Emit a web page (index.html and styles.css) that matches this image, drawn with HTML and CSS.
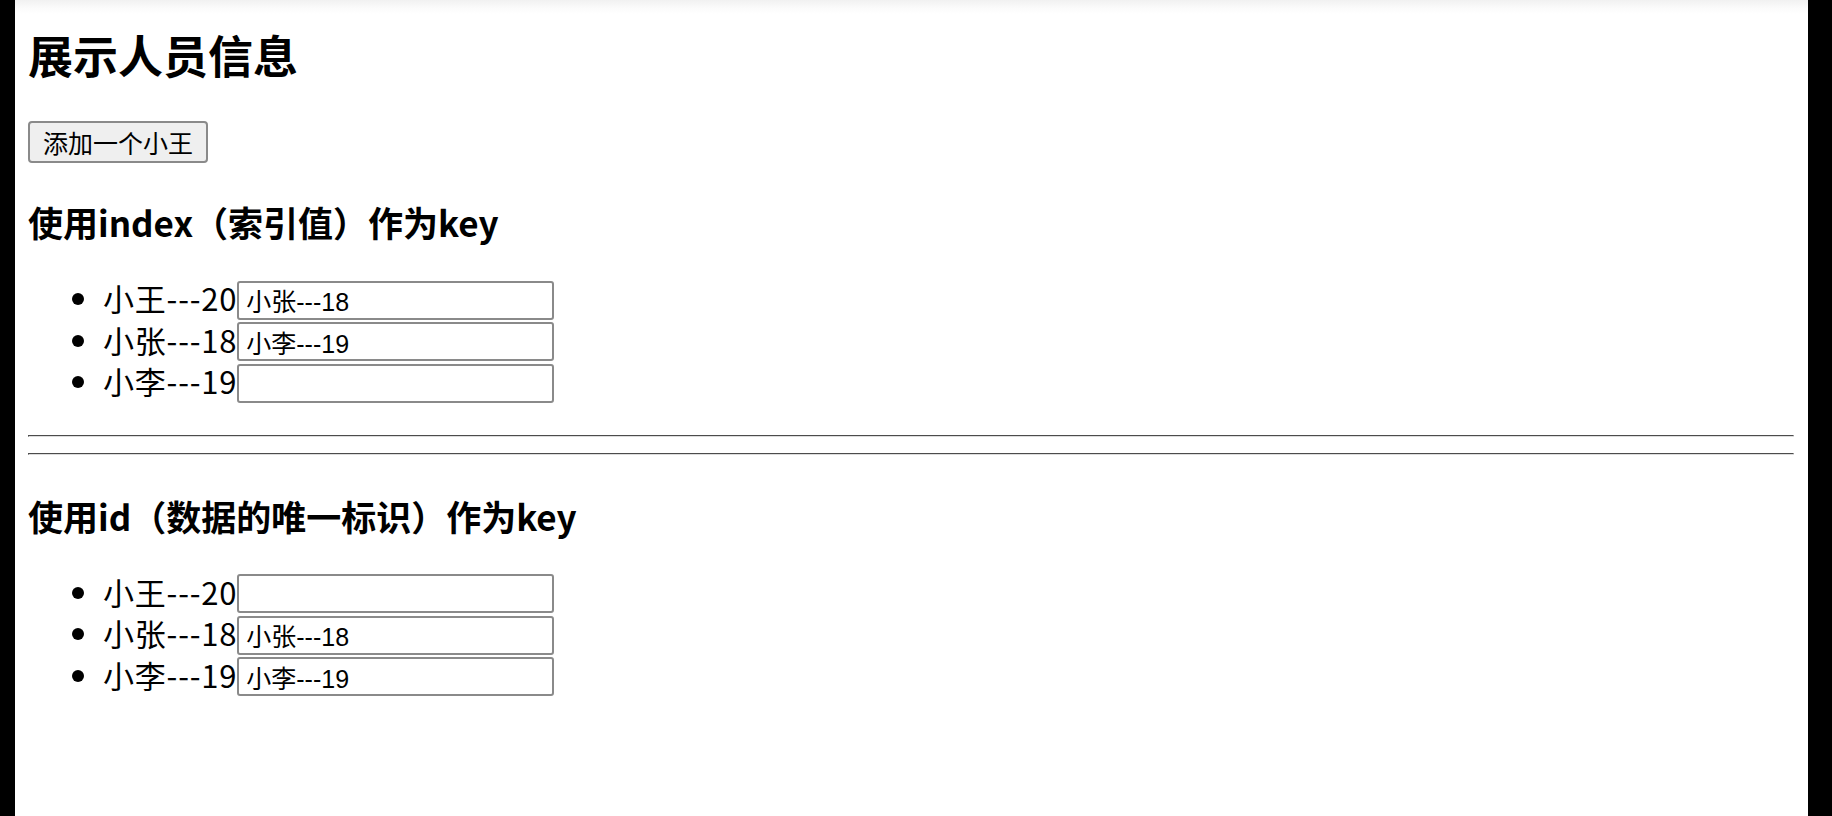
FILE: index.html
```html
<!DOCTYPE html>
<html lang="zh-CN">
<head>
<meta charset="utf-8">
<title>展示人员信息</title>
<link rel="stylesheet" href="styles.css">
</head>
<body>
<div class="screen">
  <div class="page">
    <h1 class="title">展示人员信息</h1>
    <button class="add-btn" type="button">添加一个小王</button>

    <h3 class="section-title">使用index（索引值）作为key</h3>
    <ul class="person-list">
      <li class="person">小王---20<input class="person-input" type="text" value="小张---18"></li>
      <li class="person">小张---18<input class="person-input" type="text" value="小李---19"></li>
      <li class="person">小李---19<input class="person-input" type="text" value=""></li>
    </ul>

    <hr class="divider">
    <hr class="divider">

    <h3 class="section-title">使用id（数据的唯一标识）作为key</h3>
    <ul class="person-list">
      <li class="person">小王---20<input class="person-input" type="text" value=""></li>
      <li class="person">小张---18<input class="person-input" type="text" value="小张---18"></li>
      <li class="person">小李---19<input class="person-input" type="text" value="小李---19"></li>
    </ul>
  </div>
</div>
</body>
</html>
```

FILE: styles.css
```css
html, body {
  margin: 0;
  padding: 0;
}

body {
  background: #000;
  height: 816px;
  overflow: hidden;
  font-family: "Noto Sans CJK SC", "Noto Sans", sans-serif;
  color: #000;
}

.screen {
  margin-left: 15px;
  width: 1793px;
  height: 816px;
  background: linear-gradient(to bottom, #f1f1f1 0, #fbfbfb 8px, #fff 14px);
}

.page {
  display: flow-root;
  padding: 29px 14px 0 13px;
}

.title {
  margin: 0;
  font-size: 45px;
  line-height: 52px;
  font-weight: 700;
}

.add-btn {
  display: block;
  margin-top: 40px;
  height: 42px;
  padding: 0 13px;
  font-family: "Noto Sans CJK SC", sans-serif;
  font-size: 25px;
  line-height: 38px;
  color: #000;
  background: #efefef;
  border: 2px solid #8a8a8a;
  border-radius: 4px;
}

.section-title {
  margin: 39px 0 0;
  font-size: 35px;
  line-height: 40px;
  font-weight: 700;
}

.divider + .section-title {
  margin-top: 41px;
}

.person-list {
  margin: 35px 0 0;
  padding-left: 75px;
  font-size: 31px;
  letter-spacing: 0.8px;
}

.person {
  line-height: 41.5px;
  height: 41.5px;
}

.person-input {
  box-sizing: border-box;
  width: 317px;
  height: 39px;
  margin: -5px 0 0;
  padding: 0 7px;
  vertical-align: middle;
  font-family: "Liberation Sans", "Noto Sans CJK SC", sans-serif;
  font-size: 25px;
  letter-spacing: 0;
  color: #000;
  background: #fff;
  border: 2px solid #8a8a8a;
  border-radius: 3px;
}

.divider {
  margin: 0;
  height: 0;
  border: 1px inset #9a9a9a;
  border-color: #a0a0a0 #dcdcdc #dcdcdc #a0a0a0;
}

.person-list + .divider {
  margin-top: 33px;
}

.divider + .divider {
  margin-top: 16px;
}
```
